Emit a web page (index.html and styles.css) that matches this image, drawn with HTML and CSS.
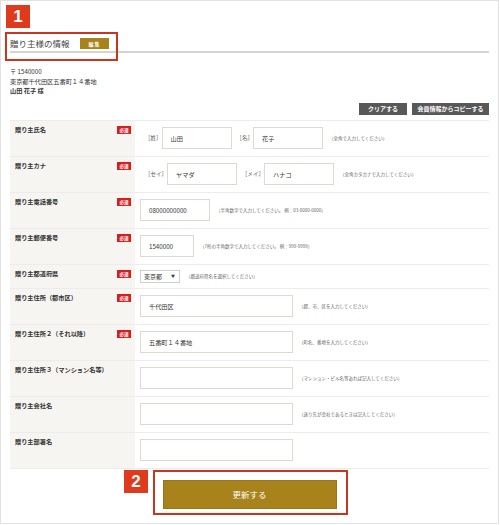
FILE: index.html
```html
<!DOCTYPE html>
<html lang="ja">
	<head>
		<meta charset="UTF-8">
		<title>贈り主様の情報</title>
		<link rel="stylesheet" href="styles.css">
	</head>
	<body>
		<div class="page">
			<div class="badge badge1">1</div>
			<div class="mark mark1"></div>

			<div class="head">
				<h2>贈り主様の情報</h2>
				<span class="edit">編 集</span>
			</div>

			<div class="addr">
				<p>〒 1540000</p>
				<p>東京都千代田区五番町１４番地</p>
				<p class="who">山田 花子 様</p>
			</div>

			<div class="tools">
				<button class="btn">クリアする</button>
				<button class="btn">会員情報からコピーする</button>
			</div>

			<div class="form">
				<div class="row">
					<div class="label">贈り主氏名<span class="req">必須</span></div>
					<div class="value">
						<span class="tag">［姓］</span><input class="in w70" value="山田">
						<span class="tag tag2">［名］</span><input class="in w70" value="花子">
						<span class="note">（全角で入力してください）</span>
					</div>
				</div>
				<div class="row">
					<div class="label">贈り主カナ<span class="req">必須</span></div>
					<div class="value">
						<span class="tag">［セイ］</span><input class="in w70" value="ヤマダ">
						<span class="tag tag2">［メイ］</span><input class="in w70" value="ハナコ">
						<span class="note">（全角カタカナで入力してください）</span>
					</div>
				</div>
				<div class="row">
					<div class="label">贈り主電話番号<span class="req">必須</span></div>
					<div class="value">
						<input class="in w70" value="08000000000">
						<span class="note">（半角数字で入力してください。 例：03-0000-0000）</span>
					</div>
				</div>
				<div class="row">
					<div class="label">贈り主郵便番号<span class="req">必須</span></div>
					<div class="value">
						<input class="in w54" value="1540000">
						<span class="note">（7桁の半角数字で入力してください。 例：999-9999）</span>
					</div>
				</div>
				<div class="row short">
					<div class="label">贈り主都道府県<span class="req">必須</span></div>
					<div class="value">
						<span class="sel">東京都<i>▼</i></span>
						<span class="note">（都道府県名を選択してください）</span>
					</div>
				</div>
				<div class="row">
					<div class="label">贈り主住所（都市区）<span class="req">必須</span></div>
					<div class="value">
						<input class="in w153" value="千代田区">
						<span class="note">（郡、市、区を入力してください）</span>
					</div>
				</div>
				<div class="row">
					<div class="label">贈り主住所２（それ以降）<span class="req">必須</span></div>
					<div class="value">
						<input class="in w153" value="五番町１４番地">
						<span class="note">（町名、番地を入力してください）</span>
					</div>
				</div>
				<div class="row">
					<div class="label">贈り主住所３（マンション名等）</div>
					<div class="value">
						<input class="in w153" value="">
						<span class="note">（マンション・ビル名等あれば記入してください）</span>
					</div>
				</div>
				<div class="row">
					<div class="label">贈り主会社名</div>
					<div class="value">
						<input class="in w153" value="">
						<span class="note">（送り先が会社であるときは記入してください）</span>
					</div>
				</div>
				<div class="row">
					<div class="label">贈り主部署名</div>
					<div class="value">
						<input class="in w153" value="">
					</div>
				</div>
			</div>

			<div class="submit">
				<button class="update">更新する</button>
			</div>

			<div class="badge badge2">2</div>
			<div class="mark mark2"></div>
		</div>
	</body>
</html>
```

FILE: styles.css
```css
body{
	margin:0;
	font-family:"Noto Sans CJK JP","Liberation Sans",sans-serif;
	color:#333;
}

.page{
	position:relative;
	width:499px;
	height:524px;
	border:1px solid #e2e2e2;
	padding:0 9px;
	box-sizing:border-box;
}

/*見出し*/
.head{
	display:flex;
	align-items:center;
	padding-top:35px;
	height:14px;
	padding-bottom:1px;
	border-bottom:2px solid #d4d4d4;
}

.head h2{
	margin:0;
	font-size:8.5px;
	font-weight:normal;
	line-height:14px;
	color:#444;
}

.edit{
	margin-left:10px;
	width:29px;
	height:11px;
	background:#a8821b;
	color:#fff;
	font-size:5px;
	line-height:11px;
	text-align:center;
	font-weight:bold;
}

.addr{
	margin-top:14px;
	font-size:6.2px;
	line-height:9.5px;
}

.addr p{
	margin:0;
}

.addr .who{
	font-weight:bold;
}

.tools{
	display:flex;
	justify-content:flex-end;
	gap:5px;
	margin-top:7px;
}

.btn{
	height:12px;
	padding:0;
	border:none;
	background:#585858;
	color:#fff;
	font-family:inherit;
	font-size:6px;
	line-height:12px;
	font-weight:bold;
}

.btn:first-child{
	width:48px;
}

.btn:last-child{
	width:77px;
}

/*フォーム*/
.form{
	margin-top:5px;
	border-top:1px solid #ececec;
}

.row{
	display:flex;
	height:35px;
	border-bottom:1px solid #ececec;
}

.row.short{
	height:23px;
}

.label{
	width:125px;
	box-sizing:border-box;
	background:#f6f5f2;
	display:flex;
	justify-content:space-between;
	align-items:flex-start;
	padding:5px 4px 0 5px;
	font-size:6.2px;
	line-height:8px;
	font-weight:bold;
	color:#333;
}

.req{
	width:14px;
	height:8px;
	background:#d51e1e;
	color:#fff;
	font-size:4.5px;
	line-height:8px;
	text-align:center;
}

.value{
	flex:1;
	display:flex;
	align-items:center;
	padding-left:5px;
}

.tag{
	font-size:5.5px;
	color:#555;
	margin-left:5px;
}

.tag2{
	margin-left:5px;
}

.in{
	height:22px;
	box-sizing:border-box;
	border:1px solid #dedad0;
	padding:0 0 0 8px;
	font-family:inherit;
	font-size:6.2px;
	color:#333;
	outline:none;
}

.w70{width:70px;}
.w54{width:54px;}
.w153{width:153px;}

.note{
	margin-left:6px;
	font-size:4.5px;
	color:#666;
}

.sel{
	width:40px;
	height:13px;
	box-sizing:border-box;
	border:1px solid #cfcfcf;
	display:flex;
	align-items:center;
	justify-content:space-between;
	padding:0 4px 0 3px;
	font-size:6px;
}

.sel i{
	font-style:normal;
	font-size:4px;
}

.submit{
	display:flex;
	justify-content:center;
	margin-top:11px;
}

.update{
	width:174px;
	height:29px;
	border:1px solid #9a7614;
	background:#a8821b;
	color:#fff;
	font-family:inherit;
	font-size:8.5px;
}

/*注釈*/
.badge{
	position:absolute;
	width:24px;
	height:23px;
	background:#e03a1c;
	color:#fff;
	font-family:"Liberation Sans",sans-serif;
	font-weight:bold;
	font-size:17px;
	line-height:23px;
	text-align:center;
}

.badge1{left:5px;top:4px;}
.badge2{left:123px;top:469px;}

.mark{
	position:absolute;
	border:2px solid #c9351d;
}

.mark1{left:4px;top:31px;width:109px;height:25px;}
.mark2{left:152px;top:469px;width:191px;height:41px;}
```
